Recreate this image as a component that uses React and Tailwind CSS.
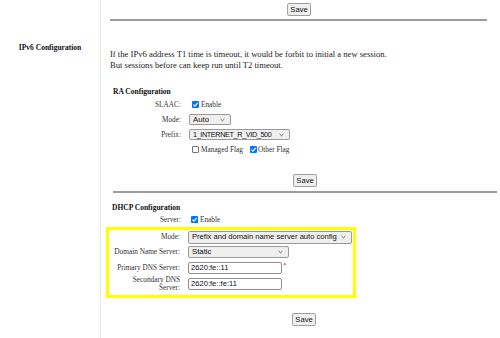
import React from 'react'

const Check = ({ checked }) =>
  checked ? (
    <span className="w-[7px] h-[7px] rounded-[1px] bg-[#0075ff] flex items-center justify-center shrink-0">
      <svg viewBox="0 0 8 8" className="w-[7px] h-[7px]">
        <path d="M1.6 4.1 L3.3 5.8 L6.6 2.1" stroke="white" strokeWidth="1.3" fill="none" />
      </svg>
    </span>
  ) : (
    <span className="block w-[7px] h-[7px] rounded-[1px] border border-[#767676] bg-white shrink-0" />
  )

const Chevron = () => (
  <svg viewBox="0 0 6 4" className="w-[5px] h-[4px] shrink-0">
    <path d="M0.8 0.9 L3 3 L5.2 0.9" stroke="#444" strokeWidth="0.9" fill="none" />
  </svg>
)

const Select = ({ value, size, text = 'text-[7.8px]' }) => (
  <div
    className={`${size} shrink-0 flex items-center justify-between pl-[3px] pr-[5px] bg-[#efefef] border border-[#9a9a9a] rounded-[2px] text-[#111] font-['Liberation_Sans',Arial,sans-serif] leading-none whitespace-nowrap`}
  >
    <span className={text}>{value}</span>
    <Chevron />
  </div>
)

const Input = ({ value }) => (
  <div className="w-[94px] h-[12px] shrink-0 flex items-center pl-[2px] bg-white border border-[#8f8f8f] rounded-[2px] text-[7.6px] text-[#111] font-['Liberation_Sans',Arial,sans-serif] leading-none whitespace-nowrap">
    {value}
  </div>
)

const SaveButton = ({ className }) => (
  <div
    className={`${className} w-[24px] h-[13px] flex items-center justify-center bg-[#efefef] border border-[#a0a0a0] rounded-[2px] text-[7.6px] text-[#111] font-['Liberation_Sans',Arial,sans-serif] leading-none`}
  >
    Save
  </div>
)

const Row = ({ label, children, height = 'h-[15px]' }) => (
  <div className={`flex items-center ${height}`}>
    <div className="w-[80px] shrink-0 text-right">{label}</div>
    <div className="ml-[8px] flex items-center whitespace-nowrap">{children}</div>
  </div>
)

const BoxRow = ({ label, children, height }) => (
  <div className={`flex items-center ${height}`}>
    <div className="w-[71px] shrink-0 text-right leading-[8px]">{label}</div>
    <div className="ml-[8px] flex items-start">{children}</div>
  </div>
)

export default function App() {
  return (
    <div className="w-[500px] h-[338px] overflow-hidden bg-white flex font-['Liberation_Serif','Times_New_Roman',serif] text-[7.3px] leading-[11px] text-[#333]">
      <div className="w-[101px] shrink-0 border-r border-[#e6e6e6] pt-[42px] text-center">
        <span className="font-bold text-[7.5px] text-[#111]">IPv6 Configuration</span>
      </div>

      <div className="flex-1 flex flex-col">
        <SaveButton className="mt-[3px] ml-[186px]" />
        <div className="mt-[3px] ml-[9px] w-[377px] h-[2px] bg-[#9c9c9c]" />

        <div className="mt-[28px] ml-[9px] text-[8.6px] text-[#222] whitespace-nowrap">
          <p>If the IPv6 address T1 time is timeout, it would be forbit to initial a new session.</p>
          <p>But sessions before can keep run until T2 timeout.</p>
        </div>

        <div className="mt-[15px] ml-[12px] font-bold text-[7.5px] text-[#111]">RA Configuration</div>
        <div className="flex flex-col">
          <Row label="SLAAC:">
            <span className="ml-[3px]"><Check checked /></span>
            <span className="ml-[2px]">Enable</span>
          </Row>
          <Row label="Mode:">
            <Select value="Auto" size="w-[42px] h-[11px]" />
          </Row>
          <Row label="Prefix:">
            <Select
              value="1_INTERNET_R_VID_500"
              size="w-[101px] h-[11px]"
              text="text-[7.3px] tracking-[-0.4px]"
            />
          </Row>
          <Row label="">
            <span className="ml-[3px]"><Check /></span>
            <span className="ml-[2px]">Managed Flag</span>
            <span className="ml-[7px]"><Check checked /></span>
            <span className="ml-[1px]">Other Flag</span>
          </Row>
        </div>

        <SaveButton className="mt-[17px] ml-[192px]" />
        <div className="mt-[4px] ml-[12px] w-[384px] h-[2px] bg-[#9c9c9c]" />

        <div className="mt-[9px] ml-[11px] font-bold text-[7.5px] text-[#111]">DHCP Configuration</div>
        <Row label="Server:" height="h-[13px]">
          <span className="ml-[2px]"><Check checked /></span>
          <span className="ml-[2px]">Enable</span>
        </Row>

        <div className="mt-[1px] ml-[5px] w-[250px] border-[3px] border-[#ffff00] pb-[2px] flex flex-col">
          <BoxRow label="Mode:" height="h-[14px]">
            <Select
              value="Prefix and domain name server auto config"
              size="w-[164px] h-[13px]"
              text="text-[7.6px]"
            />
          </BoxRow>
          <BoxRow label="Domain Name Server:" height="h-[14px] mt-[1px]">
            <Select value="Static" size="w-[101px] h-[12px]" />
          </BoxRow>
          <BoxRow label="Primary DNS Server:" height="h-[15px] mt-[1px]">
            <Input value="2620:fe::11" />
            <span className="ml-[1px] text-[#e00000] text-[7px] leading-[7px]">*</span>
          </BoxRow>
          <BoxRow
            label={
              <>
                Secondary DNS
                <br />
                Server:
              </>
            }
            height="h-[18px]"
          >
            <Input value="2620:fe::fe:11" />
          </BoxRow>
        </div>

        <SaveButton className="mt-[15px] ml-[191px]" />
      </div>
    </div>
  )
}
